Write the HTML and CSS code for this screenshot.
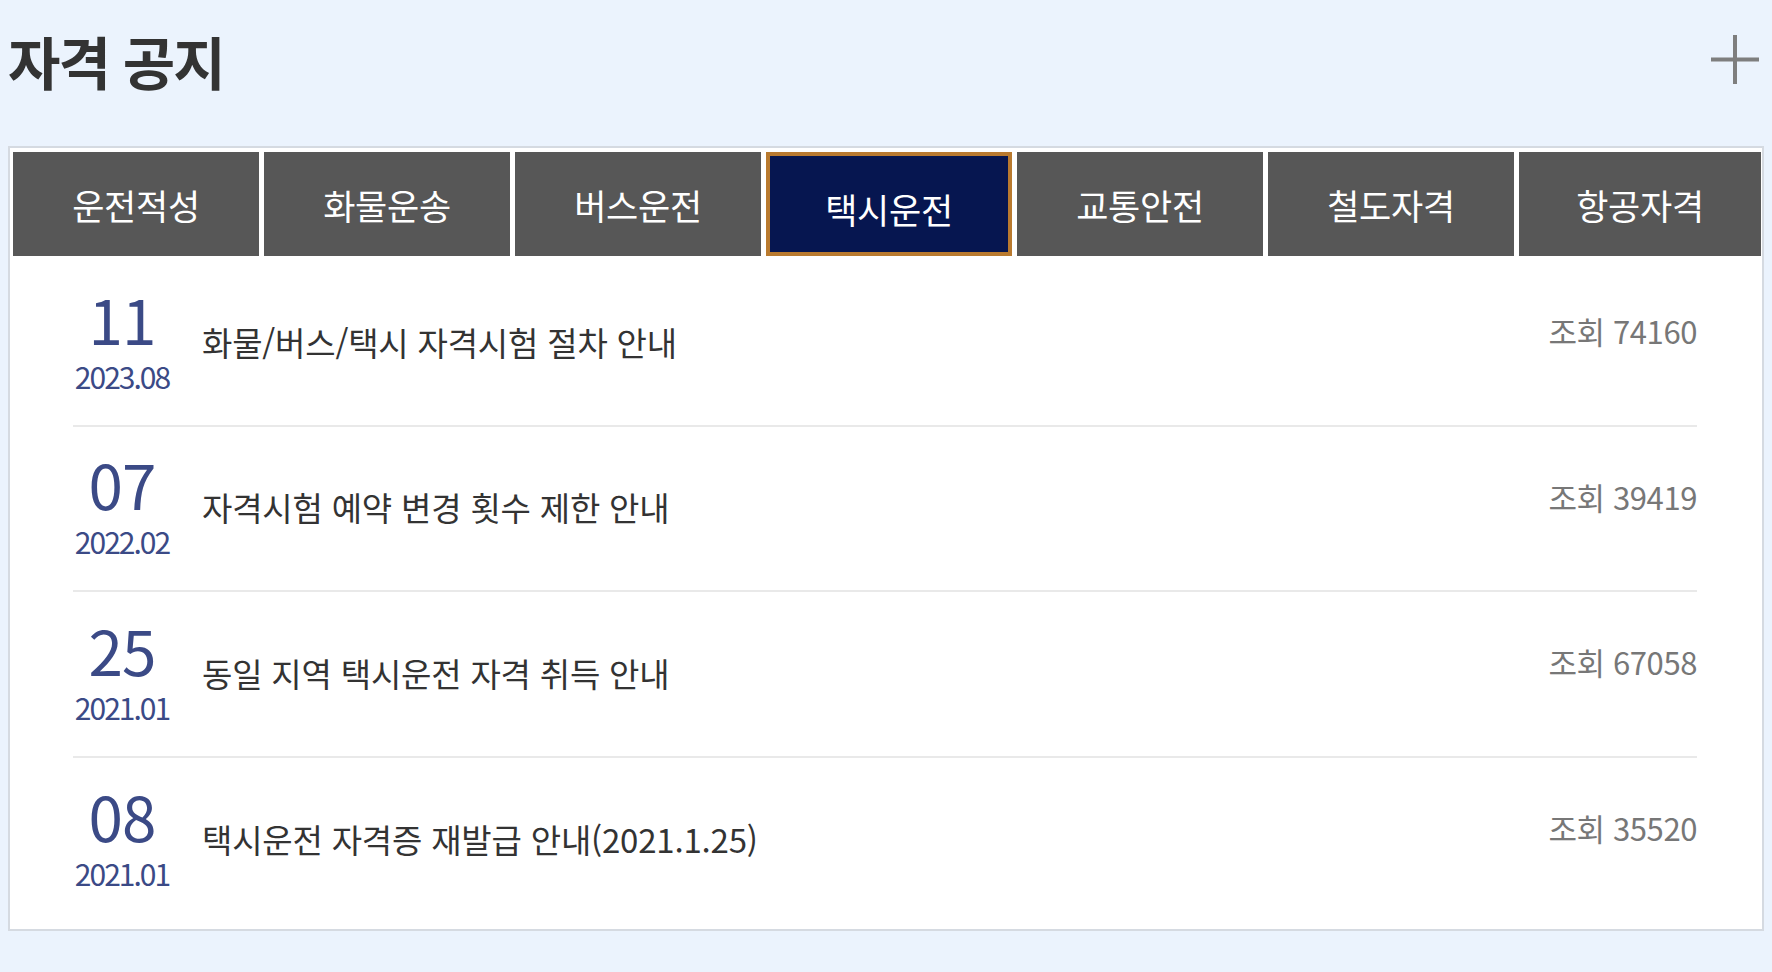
FILE: index.html
```html
<!DOCTYPE html>
<html lang="ko">
<head>
<meta charset="utf-8">
<title>자격 공지</title>
<link rel="stylesheet" href="styles.css">
</head>
<body>
<div class="page">
  <header class="head">
    <h1 class="head-title">자격 공지</h1>
    <a class="more" href="#" aria-label="더보기">
      <svg width="48" height="49" viewBox="0 0 48 49"><rect x="0" y="22.5" width="48" height="4" fill="#7e7e7e"/><rect x="22" y="0" width="4" height="49" fill="#7e7e7e"/></svg>
    </a>
  </header>
  <section class="card">
    <nav class="tabs">
      <a class="tab" href="#">운전적성</a>
      <a class="tab" href="#">화물운송</a>
      <a class="tab" href="#">버스운전</a>
      <a class="tab tab-active" href="#">택시운전</a>
      <a class="tab" href="#">교통안전</a>
      <a class="tab" href="#">철도자격</a>
      <a class="tab" href="#">항공자격</a>
    </nav>
    <ul class="list">
      <li class="row">
        <div class="date"><span class="day">11</span><span class="ym">2023.08</span></div>
        <p class="subject">화물/버스/택시 자격시험 절차 안내</p>
        <span class="hits">조회 74160</span>
      </li>
      <li class="row">
        <div class="date"><span class="day">07</span><span class="ym">2022.02</span></div>
        <p class="subject">자격시험 예약 변경 횟수 제한 안내</p>
        <span class="hits">조회 39419</span>
      </li>
      <li class="row">
        <div class="date"><span class="day">25</span><span class="ym">2021.01</span></div>
        <p class="subject">동일 지역 택시운전 자격 취득 안내</p>
        <span class="hits">조회 67058</span>
      </li>
      <li class="row">
        <div class="date"><span class="day">08</span><span class="ym">2021.01</span></div>
        <p class="subject">택시운전 자격증 재발급 안내(2021.1.25)</p>
        <span class="hits">조회 35520</span>
      </li>
    </ul>
  </section>
</div>
</body>
</html>
```
FILE: styles.css
```css
* { box-sizing: border-box; }
html, body { margin: 0; padding: 0; }
body {
  background: #ebf3fd;
  font-family: "Noto Sans CJK KR", "Noto Sans", sans-serif;
  color: #333;
}
.page { padding: 0 8px; }
.head {
  height: 146px;
  display: flex;
  align-items: flex-start;
  justify-content: space-between;
}
.head-title {
  margin: 26px 0 0 0;
  font-size: 57px;
  font-weight: 700;
  line-height: 1.2;
  letter-spacing: -2px;
  color: #333;
}
.more {
  display: block;
  margin: 35px 5px 0 0;
  line-height: 0;
}
.card {
  background: #fff;
  border: 2px solid #d5dae1;
  padding: 4px 1px 0 3px;
}
.tabs {
  display: flex;
  gap: 5px;
}
.tab {
  flex: 0 0 246px;
  min-width: 0;
  height: 104px;
  display: flex;
  align-items: center;
  justify-content: center;
  background: #575757;
  border: 4px solid #575757;
  color: #fff;
  font-size: 35px;
  letter-spacing: -0.3px;
  text-decoration: none;
}
.tab:last-child { flex: 1 1 auto; }
.tab-active {
  background: #061650;
  border-color: #b97a2f;
  padding-top: 8px;
}
.list {
  list-style: none;
  margin: 0 64px 0 60px;
  padding: 5px 0 6px;
}
.row {
  height: 165.5px;
  display: flex;
  align-items: center;
  border-bottom: 2px solid #e9e9e9;
}
.row:last-child { border-bottom: 0; }
.date {
  width: 98px;
  display: flex;
  flex-direction: column;
  align-items: center;
  color: #3b4a86;
  margin-right: 31px;
  padding-bottom: 8px;
}
.day {
  font-size: 62px;
  line-height: 1;
  letter-spacing: -1px;
}
.ym {
  margin-top: 12px;
  font-size: 30px;
  line-height: 1;
  letter-spacing: -2px;
}
.subject {
  flex: 1;
  margin: 0;
  font-size: 33px;
  letter-spacing: -0.2px;
  color: #333;
  padding-bottom: 2px;
}
.hits {
  align-self: flex-start;
  margin-top: 47px;
  font-size: 31px;
  letter-spacing: -0.4px;
  color: #777;
}
```
